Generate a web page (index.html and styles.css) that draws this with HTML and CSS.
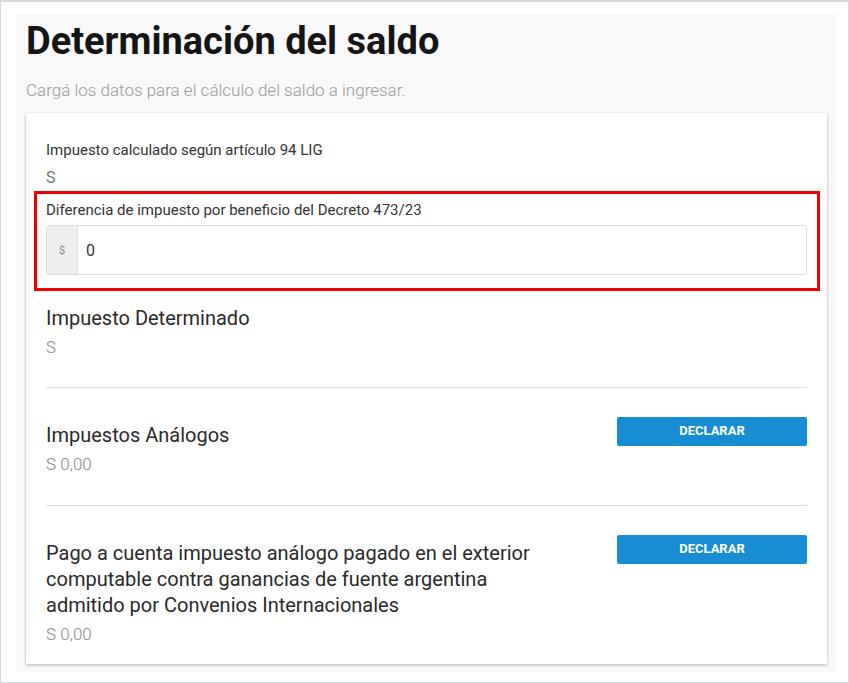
FILE: index.html
```html
<!doctype html>
<html lang="es">
  <head>
    <meta charset="utf-8">
    <title>Determinación del saldo</title>
    <link rel="stylesheet" href="styles.css">
  </head>
  <body>
    <div class="frame">
      <div class="panel">
        <h1 class="title">Determinación del saldo</h1>
        <p class="subtitle">Cargá los datos para el cálculo del saldo a ingresar.</p>

        <div class="card">
          <div class="field">
            <div class="fieldLabel">Impuesto calculado según artículo 94 LIG</div>
            <div class="fieldValue">S</div>
          </div>

          <div class="field highlighted">
            <label class="fieldLabel" for="diferencia">Diferencia de impuesto por beneficio del Decreto 473/23</label>
            <div class="inputGroup">
              <span class="addon">$</span>
              <input id="diferencia" class="input" type="text" value="0">
            </div>
          </div>

          <div class="section">
            <div class="sectionTitle">Impuesto Determinado</div>
            <div class="sectionValue">S</div>
          </div>

          <div class="row">
            <div class="rowText">
              <div class="sectionTitle">Impuestos Análogos</div>
              <div class="sectionValue">S 0,00</div>
            </div>
            <button class="button">Declarar</button>
          </div>

          <div class="row last">
            <div class="rowText">
              <div class="sectionTitle">Pago a cuenta impuesto análogo pagado en el exterior computable contra ganancias de fuente argentina admitido por Convenios Internacionales</div>
              <div class="sectionValue">S 0,00</div>
            </div>
            <button class="button">Declarar</button>
          </div>
        </div>
      </div>
    </div>
  </body>
</html>
```

FILE: styles.css
```css
* {
  box-sizing: border-box;
}

html,
body {
  margin: 0;
  background: #ffffff;
  font-family: Roboto, "Liberation Sans", Arial, sans-serif;
  color: #333333;
}

.frame {
  width: 849px;
  height: 683px;
  border: 1px solid #d6dadf;
  border-top-width: 2px;
  padding: 12px 12px 0 15px;
}

.panel {
  background: #f8f8f8;
  height: 658px;
  padding: 1px 9px 0 10px;
}

.title {
  margin: 3px 0 0;
  font-size: 38px;
  line-height: 46px;
  font-weight: 700;
  color: #151515;
}

.subtitle {
  margin: 16px 0 0;
  font-size: 17px;
  line-height: 20px;
  font-weight: 300;
  color: #9a9a9a;
}

.card {
  margin-top: 13px;
  background: #ffffff;
  box-shadow: 0 1px 3px rgba(0, 0, 0, 0.28);
  padding: 28px 20px 19px 20px;
}

.fieldLabel {
  display: block;
  font-size: 15px;
  line-height: 18px;
  color: #333333;
}

.fieldValue {
  margin-top: 8px;
  font-size: 16px;
  line-height: 22px;
  color: #777777;
}

/* caja roja de señalamiento */
.highlighted {
  margin: 2px -13px 0 -12px;
  border: 3px solid #f00000;
  padding: 7px 10px 13px 9px;
}

.inputGroup {
  display: flex;
  height: 50px;
  margin-top: 6px;
  border: 1px solid #dddddd;
  border-radius: 3px;
  overflow: hidden;
}

.addon {
  width: 31px;
  display: flex;
  align-items: center;
  justify-content: center;
  background: #eeeeee;
  border-right: 1px solid #dddddd;
  font-size: 11px;
  color: #888888;
}

.input {
  flex: 1;
  border: 0;
  outline: none;
  padding: 0 8px;
  font-family: inherit;
  font-size: 16px;
  color: #333333;
  background: #ffffff;
}

.section {
  padding: 14px 0 29px;
  border-bottom: 1px solid #dddddd;
}

.sectionTitle {
  font-size: 20px;
  line-height: 26px;
  color: #2a2a2a;
}

.sectionValue {
  margin-top: 5px;
  font-size: 17px;
  line-height: 22px;
  font-weight: 300;
  color: #888888;
}

.row {
  display: flex;
  justify-content: space-between;
  align-items: flex-start;
  gap: 20px;
  padding: 29px 0 30px;
  border-bottom: 1px solid #dddddd;
}

.row.last {
  border-bottom: 0;
  padding-bottom: 0;
}

.rowText {
  padding-top: 5px;
  max-width: 500px;
}

.button {
  flex: none;
  width: 190px;
  height: 29px;
  border: 0;
  border-radius: 2px;
  background: #168dd3;
  color: #ffffff;
  font-family: inherit;
  font-size: 13px;
  font-weight: 700;
  text-transform: uppercase;
  padding: 0 0 2px;
}
```
